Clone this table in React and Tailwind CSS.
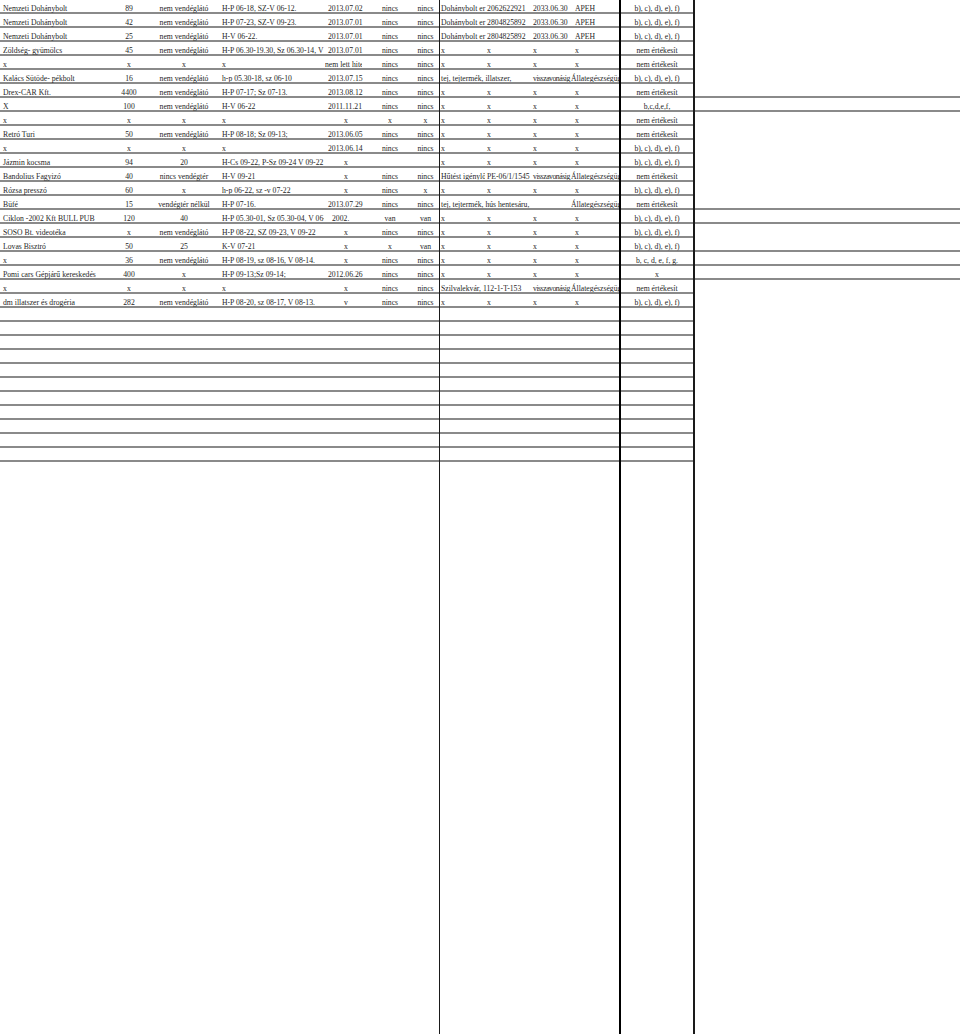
import React from "react";

const A = "w-[110px] pl-[3px] justify-start overflow-visible";
const B = "w-[38px] justify-center overflow-visible";
const C = "w-[72px] justify-center overflow-visible";
const D = "w-[104px] pl-[2px] justify-start overflow-hidden";
const Ed = "w-[44px] pl-[4px] justify-start overflow-visible";
const Ec = "w-[44px] justify-center overflow-visible";
const E2 = "w-[44px] pl-[8px] justify-start overflow-visible";
const F = "w-[44px] justify-center overflow-visible";
const F2 = "w-[27px] justify-center overflow-visible";

const G = "w-[45px] pl-[1px] justify-start overflow-hidden";
const H = "w-[46px] pl-[2px] justify-start overflow-hidden";
const I = "w-[40px] pl-[2px] justify-start overflow-hidden";
const IV = "w-[40px] pl-[2px] justify-start overflow-hidden tracking-[-0.45px]";
const J = "w-[48px] pl-[4px] justify-start overflow-hidden";
const J0 = "w-[48px] pl-0 justify-start overflow-hidden";
const GH = "w-[91px] pl-[1px] justify-start overflow-hidden";
const GHI = "w-[131px] pl-[1px] justify-start overflow-hidden";

const X4 = [
  [G, "x"],
  [H, "x"],
  [I, "x"],
  [J, "x"],
];

const BCDEF = "b), c), d), e), f)";
const NEM = "nem értékesít";

const rows = [
  {
    l: [[A, "Nemzeti Dohánybolt"], [B, "89"], [C, "nem vendéglátó"], [D, "H-P 06-18, SZ-V 06-12."], [Ed, "2013.07.02"], [F, "nincs"], [F2, "nincs"]],
    m: [[GH, "Dohánybolt er 2062622921"], [I, "2033.06.30"], [J, "APEH"]],
    k: BCDEF,
  },
  {
    l: [[A, "Nemzeti Dohánybolt"], [B, "42"], [C, "nem vendéglátó"], [D, "H-P 07-23, SZ-V 09-23."], [Ed, "2013.07.01"], [F, "nincs"], [F2, "nincs"]],
    m: [[GH, "Dohánybolt er 2804825892"], [I, "2033.06.30"], [J, "APEH"]],
    k: BCDEF,
  },
  {
    l: [[A, "Nemzeti Dohánybolt"], [B, "25"], [C, "nem vendéglátó"], [D, "H-V 06-22."], [Ed, "2013.07.01"], [F, "nincs"], [F2, "nincs"]],
    m: [[GH, "Dohánybolt er 2804825892"], [I, "2033.06.30"], [J, "APEH"]],
    k: BCDEF,
  },
  {
    l: [[A, "Zöldség- gyümölcs"], [B, "45"], [C, "nem vendéglátó"], [D, "H-P 06.30-19.30, Sz 06.30-14, V 06-12"], [Ed, "2013.07.01"], [F, "nincs"], [F2, "nincs"]],
    m: X4,
    k: NEM,
  },
  {
    l: [[A, "x"], [B, "x"], [C, "x"], [D, "x"], ["E_clip", "nem lett hitel"], [F, "nincs"], [F2, "nincs"]],
    m: X4,
    k: NEM,
  },
  {
    l: [[A, "Kalács Sütöde- pékbolt"], [B, "16"], [C, "nem vendéglátó"], [D, "h-p 05.30-18, sz 06-10"], [Ed, "2013.07.15"], [F, "nincs"], [F2, "nincs"]],
    m: [[GH, "tej, tejtermék, illatszer,"], [IV, "visszavonásig"], [J0, "Állategészségügyi"]],
    k: BCDEF,
  },
  {
    l: [[A, "Drex-CAR Kft."], [B, "4400"], [C, "nem vendéglátó"], [D, "H-P 07-17; Sz 07-13."], [Ed, "2013.08.12"], [F, "nincs"], [F2, "nincs"]],
    m: X4,
    k: NEM,
  },
  {
    l: [[A, "X"], [B, "100"], [C, "nem vendéglátó"], [D, "H-V 06-22"], [Ed, "2011.11.21"], [F, "nincs"], [F2, "nincs"]],
    m: X4,
    k: "b,c,d,e,f,",
  },
  {
    l: [[A, "x"], [B, "x"], [C, "x"], [D, "x"], [Ec, "x"], [F, "x"], [F2, "x"]],
    m: X4,
    k: NEM,
  },
  {
    l: [[A, "Retró Turi"], [B, "50"], [C, "nem vendéglátó"], [D, "H-P 08-18; Sz 09-13;"], [Ed, "2013.06.05"], [F, "nincs"], [F2, "nincs"]],
    m: X4,
    k: NEM,
  },
  {
    l: [[A, "x"], [B, "x"], [C, "x"], [D, "x"], [Ed, "2013.06.14"], [F, "nincs"], [F2, "nincs"]],
    m: X4,
    k: BCDEF,
  },
  {
    l: [[A, "Jázmin kocsma"], [B, "94"], [C, "20"], [D, "H-Cs 09-22, P-Sz 09-24 V 09-22"], [Ec, "x"], [F, ""], [F2, ""]],
    m: X4,
    k: BCDEF,
  },
  {
    l: [[A, "Bandolius Fagyizó"], [B, "40"], [C, "nincs vendégtér"], [D, "H-V 09-21"], [Ec, "x"], [F, "nincs"], [F2, "nincs"]],
    m: [[G, "Hűtést igénylő termék"], [H, "PE-06/1/1545"], [IV, "visszavonásig"], [J0, "Állategészségügyi"]],
    k: NEM,
  },
  {
    l: [[A, "Rózsa presszó"], [B, "60"], [C, "x"], [D, "h-p 06-22, sz -v 07-22"], [Ec, "x"], [F, "nincs"], [F2, "x"]],
    m: X4,
    k: BCDEF,
  },
  {
    l: [[A, "Büfé"], [B, "15"], [C, "vendégtér nélkül"], [D, "H-P 07-16."], [Ed, "2013.07.29"], [F, "nincs"], [F2, "nincs"]],
    m: [[GHI, "tej, tejtermék, hús hentesáru,"], [J0, "Állategészségügyi"]],
    k: NEM,
  },
  {
    l: [[A, "Ciklon -2002 Kft BULL PUB"], [B, "120"], [C, "40"], [D, "H-P 05.30-01, Sz 05.30-04, V 06-24"], [E2, "2002."], [F, "van"], [F2, "van"]],
    m: X4,
    k: BCDEF,
  },
  {
    l: [[A, "SOSO Bt. videotéka"], [B, "x"], [C, "nem vendéglátó"], [D, "H-P 08-22, SZ 09-23, V 09-22"], [Ec, "x"], [F, "nincs"], [F2, "nincs"]],
    m: X4,
    k: BCDEF,
  },
  {
    l: [[A, "Lovas Bisztró"], [B, "50"], [C, "25"], [D, "K-V 07-21"], [Ec, "x"], [F, "x"], [F2, "van"]],
    m: X4,
    k: BCDEF,
  },
  {
    l: [[A, "x"], [B, "36"], [C, "nem vendéglátó"], [D, "H-P 08-19, sz 08-16, V 08-14."], [Ec, "x"], [F, "nincs"], [F2, "nincs"]],
    m: X4,
    k: "b, c, d, e, f, g.",
  },
  {
    l: [[A, "Pomi cars Gépjárű kereskedés"], [B, "400"], [C, "x"], [D, "H-P 09-13;Sz 09-14;"], [Ed, "2012.06.26"], [F, "nincs"], [F2, "nincs"]],
    m: X4,
    k: "x",
  },
  {
    l: [[A, "x"], [B, "x"], [C, "x"], [D, "x"], [Ec, "x"], [F, "nincs"], [F2, "nincs"]],
    m: [[GH, "Szilvalekvár, 112-1-T-153"], [IV, "visszavonásig"], [J0, "Állategészségügyi"]],
    k: NEM,
  },
  {
    l: [[A, "dm illatszer és drogéria"], [B, "282"], [C, "nem vendéglátó"], [D, "H-P 08-20, sz 08-17, V 08-13."], [Ec, "v"], [F, "nincs"], [F2, "nincs"]],
    m: X4,
    k: BCDEF,
  },
];

const EMPTY = 11;
const rightLines = new Set([6, 7, 14, 15, 17, 18, 19]);

function Cell({ cls, t }) {
  if (cls === "E_clip") {
    return (
      <div className="w-[44px] pl-[1px] flex items-end justify-start overflow-hidden whitespace-nowrap">
        <span className="block max-w-[37px] overflow-hidden leading-[7px] h-[12px] pt-[5px]">{t}</span>
      </div>
    );
  }
  return (
    <div className={`${cls} flex items-end whitespace-nowrap h-full`}>
      <span className="leading-[7px]">{t}</span>
    </div>
  );
}

const ROW = "h-[14px] border-b-2 border-[#8a8a8a] flex";
const ROW_EMPTY = "h-[14px] border-b-2 border-[#8a8a8a]";

export default function App() {
  return (
    <div
      className="w-[960px] h-[1034px] bg-white flex overflow-hidden text-[7.7px] text-[#262626]"
      style={{ fontFamily: '"Liberation Serif", "Times New Roman", serif' }}
    >
      {/* left block */}
      <div className="w-[439px] shrink-0 flex flex-col">
        {rows.map((r, i) => (
          <div key={i} className={ROW}>
            {r.l.map(([c, t], j) => (
              <Cell key={j} cls={c} t={t} />
            ))}
          </div>
        ))}
        {Array.from({ length: EMPTY }).map((_, i) => (
          <div key={"e" + i} className={ROW_EMPTY} />
        ))}
      </div>
      <div className="w-px shrink-0 bg-[#1a1a1a]" />
      {/* middle block */}
      <div className="w-[179px] shrink-0 flex flex-col">
        {rows.map((r, i) => (
          <div key={i} className={ROW}>
            {r.m.map(([c, t], j) => (
              <Cell key={j} cls={c} t={t} />
            ))}
          </div>
        ))}
        {Array.from({ length: EMPTY }).map((_, i) => (
          <div key={"e" + i} className={ROW_EMPTY} />
        ))}
      </div>
      <div className="w-[2px] shrink-0 bg-black" />
      {/* K column */}
      <div className="w-[72px] shrink-0 flex flex-col">
        {rows.map((r, i) => (
          <div key={i} className={ROW}>
            <div className="w-full flex items-end justify-center whitespace-nowrap h-full">
              <span className="leading-[7px]">{r.k}</span>
            </div>
          </div>
        ))}
        {Array.from({ length: EMPTY }).map((_, i) => (
          <div key={"e" + i} className={ROW_EMPTY} />
        ))}
      </div>
      <div className="w-[1.5px] shrink-0 bg-[#1a1a1a]" />
      {/* right free area */}
      <div className="flex-1 flex flex-col">
        {rows.map((r, i) => (
          <div
            key={i}
            className={rightLines.has(i) ? "h-[14px] border-b-2 border-[#8a8a8a]" : "h-[14px]"}
          />
        ))}
      </div>
    </div>
  );
}
